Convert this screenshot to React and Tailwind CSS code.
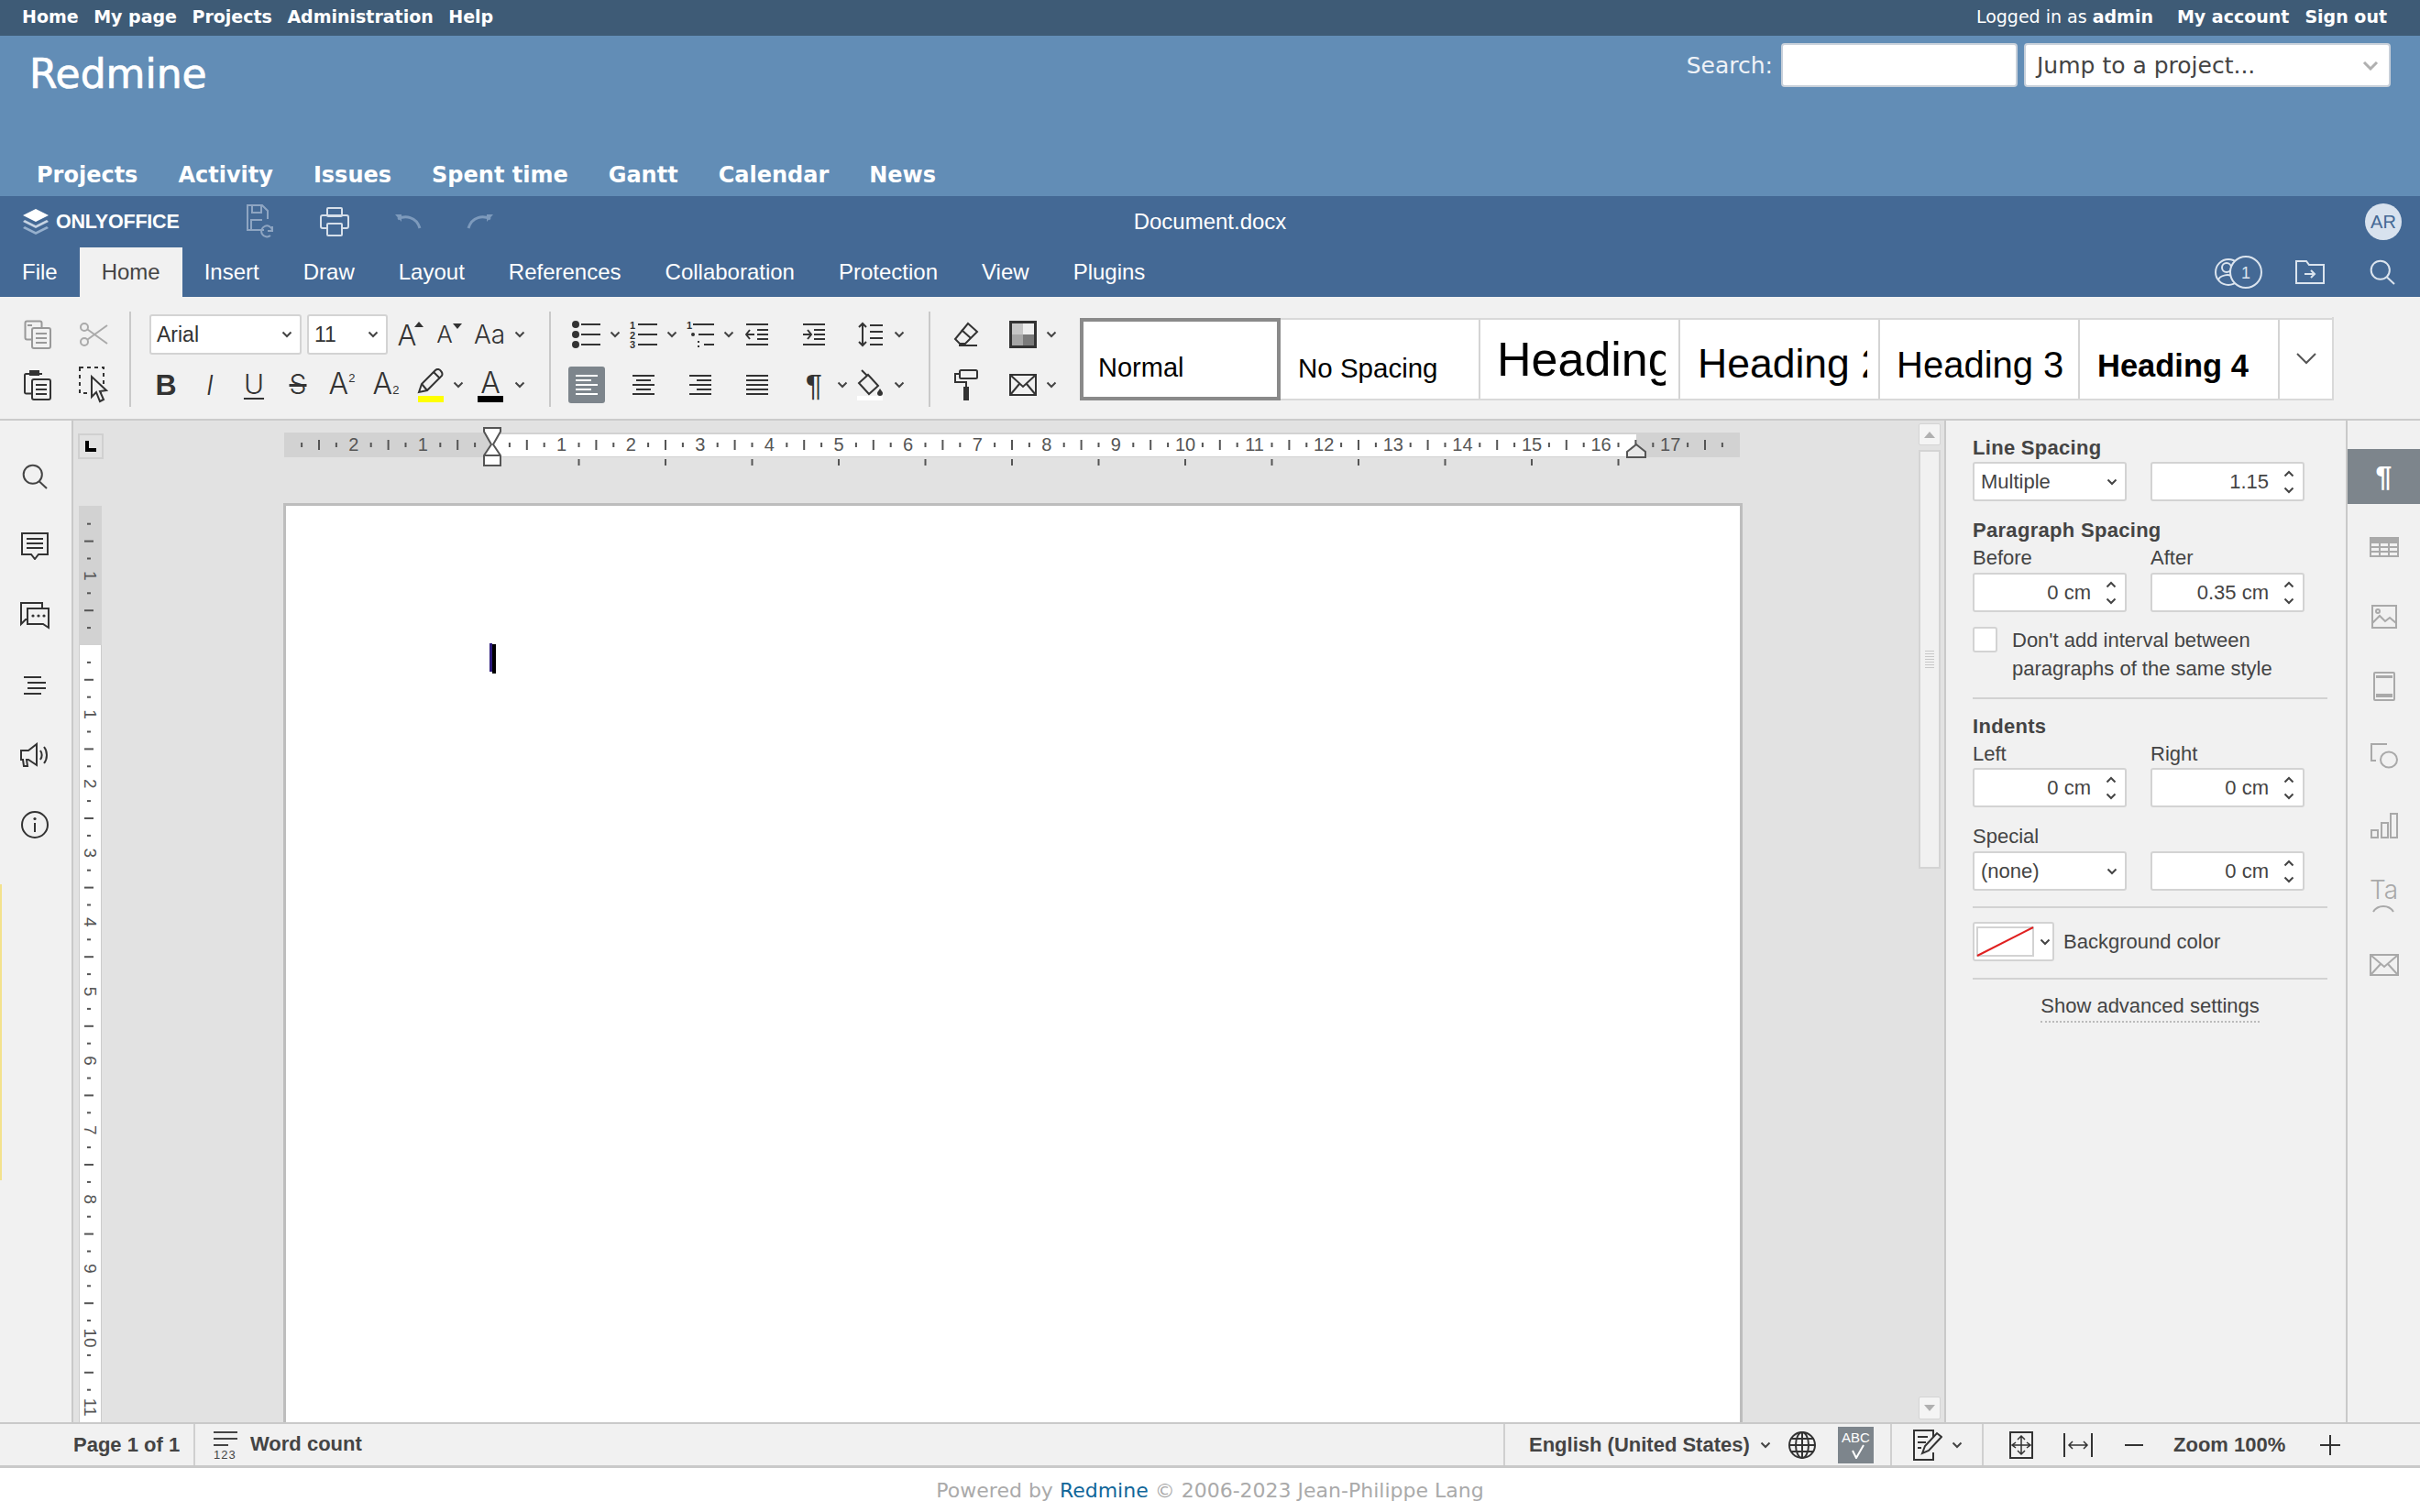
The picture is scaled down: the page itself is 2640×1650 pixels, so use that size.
import React from 'react';

const D = "#444444";
const Sv = ({ w = 30, h = 30, c = D, sw = 2, children, className = "" }) => (
  <svg width={w} height={h} viewBox={`0 0 ${w} ${h}`} fill="none" stroke={c} strokeWidth={sw} className={"block shrink-0 " + className}>{children}</svg>
);
const Chev = ({ c = "#444444", up = false }) => (
  <svg width="12" height="8" viewBox="0 0 12 8" fill="none" stroke={c} strokeWidth="2" className="block shrink-0">
    <path d={up ? "M1.5 6.5 L6 2 L10.5 6.5" : "M1.5 1.5 L6 6 L10.5 1.5"} />
  </svg>
);
const Lines = ({ x1 = 0, x2 = 30, ys = [] }) => <path d={ys.map(y => `M${x1} ${y}H${x2}`).join("")} />;

const IcCopy = () => (<Sv w={30} h={32} c="#999999"><rect x="1.5" y="1.5" width="18" height="20" rx="2" /><rect x="9" y="9" width="20" height="22" rx="2" fill="#f1f1f1" /><Lines x1={13} x2={25} ys={[15, 20, 25]} /><Lines x1={4} x2={9} ys={[6]} /></Sv>);
const IcCut = () => (<Sv w={32} h={28} c="#aaaaaa"><circle cx="6" cy="6" r="4" /><circle cx="6" cy="22" r="4" /><path d="M9.5 8.5L31 24M9.5 19.5L31 4" /></Sv>);
const IcPaste = () => (<Sv w={30} h={34} c="#333333"><path d="M6 5H2.5a1.5 1.5 0 0 0-1.5 1.5V25a1.5 1.5 0 0 0 1.5 1.5H8M16 5h4" /><rect x="6" y="1" width="11" height="6" fill="#333333" stroke="none" /><rect x="9" y="11" width="20" height="22" rx="2" fill="#f1f1f1" /><Lines x1={13} x2={25} ys={[17, 22, 27]} /></Sv>);
const IcSelect = () => (<Sv w={32} h={40} c="#333333"><rect x="1" y="1" width="26" height="28" strokeDasharray="4 4" /><path d="M14 11V33L19 28L23 38L27 36L23 27L30 26Z" fill="#f1f1f1" /></Sv>);
const Thin = ({ s = 34, children }) => <span className="font-['Inter',sans-serif] font-light text-[#333333] leading-none" style={{ fontSize: s }}>{children}</span>;

const IcBullet = () => (<Sv w={32} h={30} c="#333333"><circle cx="4" cy="4" r="3" fill="#333333" /><circle cx="4" cy="15" r="3" fill="#333333" /><circle cx="4" cy="26" r="3" fill="#333333" /><Lines x1={10} x2={31} ys={[4, 15, 26]} /></Sv>);
const TN = ({ x, y, t }) => <text x={x} y={y} fontSize="11" fontWeight="700" fontFamily="'Liberation Sans',sans-serif" fill="#333333" stroke="none">{t}</text>;
const IcNum = () => (<Sv w={32} h={30} c="#333333"><TN x={1} y={9} t="1" /><TN x={1} y={20} t="2" /><TN x={1} y={30} t="3" /><Lines x1={10} x2={31} ys={[4, 15, 26]} /></Sv>);
const IcMulti = () => (<Sv w={32} h={30} c="#333333"><TN x={1} y={9} t="1" /><Lines x1={8} x2={31} ys={[4]} /><circle cx="8" cy="15" r="2" fill="#333333" stroke="none" /><Lines x1={14} x2={31} ys={[15]} /><path d="M14 22v2M14 27v2" /><Lines x1={20} x2={31} ys={[26]} /></Sv>);
const IcOutdent = () => (<Sv w={26} h={26} c="#333333"><Lines x1={1} x2={25} ys={[2, 24]} /><Lines x1={13} x2={25} ys={[8, 13, 18]} /><path d="M10 13H1M5 8L1 13L5 18" /></Sv>);
const IcIndent = () => (<Sv w={26} h={26} c="#333333"><Lines x1={1} x2={25} ys={[2, 24]} /><Lines x1={13} x2={25} ys={[8, 13, 18]} /><path d="M1 13H10M6 8L10 13L6 18" /></Sv>);
const IcLS = () => (<Sv w={28} h={28} c="#333333"><path d="M5 2V26M1 6L5 2L9 6M1 22L5 26L9 22" /><Lines x1={13} x2={27} ys={[4, 11, 18, 25]} /></Sv>);
const IcErase = () => (<Sv w={28} h={28} c="#333333"><path d="M16 2L26 11L13 24H7L2 19Z" /><path d="M9 9L19 18" /><Lines x1={6} x2={26} ys={[26]} /></Sv>);
const IcShade = () => (<Sv w={30} h={30} c="#333333" sw={3}><rect x="2" y="2" width="13" height="13" fill="#c6c6c6" stroke="none" /><rect x="15" y="2" width="13" height="13" fill="#eeeeee" stroke="none" /><rect x="2" y="15" width="13" height="13" fill="#a6a6a6" stroke="none" /><rect x="15" y="15" width="13" height="13" fill="#7a7a7a" stroke="none" /><rect x="1.5" y="1.5" width="27" height="27" /></Sv>);
const AlignI = ({ c = "#333333", xs }) => (<Sv w={26} h={24} c={c}>{xs.map((p, i) => <path key={i} d={`M${p[0]} ${2 + i * 5}H${p[1]}`} />)}</Sv>);
const IcFill = () => (<Sv w={30} h={34} c="#333333"><path d="M5 1L11 7M12 6L23 18L13 27L2 15Z" /><path d="M25 21c2 3 3 4 3 5a3 3 0 0 1-6 0c0-1 1-2 3-5Z" fill="#333333" stroke="none" /><rect x="0" y="29" width="28" height="5" fill="#ffffff" stroke="none" /></Sv>);
const IcRoller = () => (<Sv w={26} h={34} c="#333333"><rect x="6" y="1" width="19" height="9" rx="1.5" /><path d="M6 5H1V14H13V19" /><rect x="10" y="19" width="6" height="15" fill="#333333" stroke="none" /></Sv>);
const IcMail = ({ c = "#333333", w = 30, h = 24 }) => (<Sv w={w} h={h} c={c}><rect x="1" y="1" width={w - 2} height={h - 2} /><path d={`M1 1L${w / 2} ${h / 2 + 2}L${w - 1} 1M1 ${h - 1}L${w / 2 - 4} ${h / 2 - 1}M${w - 1} ${h - 1}L${w / 2 + 4} ${h / 2 - 1}`} /></Sv>);

const IcSearch = ({ c = D, s = 28 }) => (<Sv w={s} h={s} c={c}><circle cx={s * 0.42} cy={s * 0.42} r={s * 0.36} /><path d={`M${s * 0.66} ${s * 0.68}L${s - 1} ${s - 1}`} /></Sv>);
const IcComment = () => (<Sv w={32} h={30} c="#333333"><path d="M2 1H30V24H20L16 29L12 24H2Z" /><Lines x1={7} x2={25} ys={[7, 12, 17]} /></Sv>);
const IcChat = () => (<Sv w={32} h={30} c="#333333"><path d="M24 6V1H1V24L6 19H7" /><path d="M8 7H31V28L25 24H8Z" fill="#f1f1f1" /><circle cx="14" cy="15" r="1.6" fill="#333" stroke="none" /><circle cx="20" cy="15" r="1.6" fill="#333" stroke="none" /><circle cx="26" cy="15" r="1.6" fill="#333" stroke="none" /></Sv>);
const IcHead = () => (<Sv w={26} h={22} c="#333333"><Lines x1={1} x2={20} ys={[2]} /><Lines x1={5} x2={25} ys={[8]} /><Lines x1={5} x2={25} ys={[14]} /><Lines x1={1} x2={20} ys={[20]} /></Sv>);
const IcSpeak = () => (<Sv w={32} h={28} c="#333333"><path d="M1 9H9L18 2V25L9 19H7L8 26H4L3 19H1Z" /><path d="M22 9c2 3 2 7 0 10M26 5c4 5 4 13 0 18" /></Sv>);
const IcInfo = () => (<Sv w={30} h={30} c="#333333"><circle cx="15" cy="15" r="14" /><path d="M15 13V23" /><circle cx="15" cy="8.5" r="1.6" fill="#333" stroke="none" /></Sv>);

const A = "#a9a9a9";
const IcTable = () => (<Sv w={32} h={22} c={A}><rect x="1" y="1" width="30" height="20" /><rect x="1" y="1" width="30" height="6" fill={A} stroke="none" /><path d="M11 1V21M21 1V21M1 11H31M1 16H31" /></Sv>);
const IcImg = () => (<Sv w={28} h={26} c={A}><rect x="1" y="1" width="26" height="24" /><circle cx="7" cy="7" r="2" /><path d="M1 20L9 12L15 18L20 14L27 20" /></Sv>);
const IcHF = () => (<Sv w={24} h={32} c={A}><rect x="1" y="1" width="22" height="30" rx="1" /><rect x="3" y="4" width="18" height="3" fill={A} stroke="none" /><rect x="3" y="24" width="18" height="4" fill={A} stroke="none" /></Sv>);
const IcShape = () => (<Sv w={30} h={28} c={A}><path d="M18 1H1V19H6" /><ellipse cx="20" cy="18" rx="9" ry="8.5" /></Sv>);
const IcChart = () => (<Sv w={30} h={28} c={A}><rect x="1" y="19" width="7" height="8" /><rect x="12" y="11" width="7" height="16" /><rect x="22" y="1" width="7" height="26" /></Sv>);
const IcTa = () => (<Sv w={26} h={12} c={A}><path d="M2 11c5-8 17-8 22 0" /></Sv>);

const IcSave = () => (<Sv w={32} h={38} c="#8ea5c2"><path d="M20 28H2V1H18L24 7V16" /><path d="M7 1V9H17V1M6 28V17H18" /><path d="M29 28a6 6 0 1 0-2 6M29 24V29H24" /></Sv>);
const IcPrint = () => (<Sv w={32} h={32} c="#d6dfea"><rect x="8" y="1" width="16" height="9" rx="1" /><rect x="1" y="9" width="30" height="14" rx="2" /><rect x="8" y="18" width="16" height="13" rx="1" fill="#446995" /></Sv>);
const IcUndo = ({ flip }) => (<Sv w={30} h={18} c="#7d9abc" sw={3} className={flip ? "-scale-x-100" : ""}><path d="M4 6c8-4 20-3 24 10" /><path d="M1 1H8V9Z" fill="#7d9abc" stroke="none" /></Sv>);

const Tab = ({ children, active }) => (
  <div className={active ? "h-full flex items-center px-[24px] bg-[#f1f1f1] text-[#444444]" : "h-full flex items-center text-white"}>{children}</div>
);

const Box = ({ w = "w-[168px]", h = "h-[43px]", children, className = "" }) => (
  <div className={`${w} ${h} bg-white border-2 border-[#d3d3d3] rounded-[3px] flex items-center ${className}`}>{children}</div>
);
const Spin = ({ v }) => (
  <Box>
    <span className="flex-1 text-right text-[22px] text-[#444444] pr-[16px]">{v}</span>
    <div className="flex flex-col gap-[10px] items-center pr-[9px]"><Chev up /><Chev /></div>
  </Box>
);
const Sel = ({ v }) => (
  <Box className="justify-between pl-[7px] pr-[8px]">
    <span className="text-[22px] text-[#444444]">{v}</span><Chev />
  </Box>
);
const Label = ({ b, children, className = "" }) => (
  <div className={`h-[22px] leading-[24px] text-[22px] text-[#444444] whitespace-nowrap ${b ? "font-bold tracking-[0.3px]" : ""} ${className}`}>{children}</div>
);
const HR = ({ className }) => <div className={`h-[2px] w-[387px] bg-[#d2d2d2] ${className}`} />;

const cm = 75.6;
const qs = (a, b) => { const o = []; for (let i = a; i <= b; i++) o.push(i); return o; };

const HRuler = () => {
  const z = 228;
  return (
    <svg width="1592" height="46" viewBox="0 0 1592 46" className="block">
      <rect x="1" y="8" width="1588" height="27" fill="#d2d2d2" />
      <rect x={z} y="10" width="1248" height="24" fill="#ffffff" />
      {qs(-11, 71).map(q => {
        if (q === 0) return null;
        const x = z + q * cm / 4;
        if (q % 4 === 0) return <text key={q} x={x} y="28" textAnchor="middle" fontSize="20" fontFamily="'Liberation Sans',sans-serif" fill="#555555">{Math.abs(q / 4)}</text>;
        const big = Math.abs(q % 4) === 2;
        return <rect key={q} x={x - 1} y={big ? 16 : 19} width="2" height={big ? 11 : 5} fill="#555555" />;
      })}
      {qs(1, 13).map(n => <rect key={n} x={z + n * 94.5 - 1} y="37" width="2" height="7" fill="#555555" />)}
      <path d={`M${z - 9} 3H${z + 9}V7L${z + 1} 21L${z + 9} 33V44H${z - 9}V33L${z - 1} 21L${z - 9} 7Z`} fill="#ffffff" stroke="#555555" strokeWidth="2" />
      <path d={`M${z - 9} 33H${z + 9}`} stroke="#555555" strokeWidth="2" />
      <path d={`M${z + 1238} 35V29L${z + 1248} 21L${z + 1258} 29V35Z`} fill="#e8e8e8" stroke="#555555" strokeWidth="2" />
    </svg>
  );
};

const VRuler = () => {
  const z = 152;
  return (
    <svg width="25" height="1000" viewBox="0 0 25 1000" className="block">
      <rect x="0" y="0" width="25" height={z} fill="#d2d2d2" />
      <rect x="1" y={z} width="23" height="848" fill="#ffffff" />
      <rect x="0" y={z} width="1" height="848" fill="#cccccc" />
      <rect x="24" y={z} width="1" height="848" fill="#cccccc" />
      {qs(-7, 44).map(q => {
        if (q === 0) return null;
        const y = z + q * cm / 4;
        if (q % 4 === 0) return <text key={q} x="12" y={y} textAnchor="middle" dominantBaseline="central" fontSize="19" fontFamily="'Liberation Sans',sans-serif" fill="#555555" transform={`rotate(90 12 ${y})`}>{Math.abs(q / 4)}</text>;
        const big = Math.abs(q % 4) === 2;
        return <rect key={q} x={big ? 6 : 9} y={y - 1} width={big ? 10 : 4} height="2" fill="#555555" />;
      })}
    </svg>
  );
};

export default function App() {
  return (
    <div className="w-[2640px] h-[1650px] flex flex-col bg-white overflow-hidden font-['Liberation_Sans',Arial,sans-serif]">
      {/* Redmine top */}
      <div className="h-[39px] shrink-0 bg-[#3e5b76] flex items-center justify-between pl-[24px] pr-[36px] pb-[2px] text-white font-['DejaVu_Sans',sans-serif] text-[19px] font-bold">
        <div className="flex gap-[16.5px]"><span>Home</span><span>My page</span><span>Projects</span><span>Administration</span><span>Help</span></div>
        <div className="flex gap-[26px]">
          <span><span className="font-normal">Logged in as </span>admin</span>
          <span className="flex gap-[17px]"><span>My account</span><span>Sign out</span></span>
        </div>
      </div>
      <div className="h-[175px] shrink-0 bg-[#628db6] flex flex-col font-['DejaVu_Sans',sans-serif] text-white">
        <div className="flex justify-between pl-[32px] pr-[32px] pt-[8px]">
          <div className="text-[44px] leading-[50px] pt-[9px] [-webkit-text-stroke:0.7px_white]">Redmine</div>
          <div className="flex items-center gap-[7px] h-[48px]">
            <span className="text-[25px] text-[#eef2f7] mr-[2px] pt-[2px]">Search:</span>
            <div className="w-[258px] h-[48px] bg-white rounded-[4px] border-2 border-[#c8d0da]" />
            <div className="w-[400px] h-[48px] bg-white rounded-[4px] border-2 border-[#c8d0da] flex items-center justify-between pl-[12px] pr-[11px]">
              <span className="text-[25px] text-[#444444] pt-[2px]">Jump to a project...</span>
              <svg width="18" height="11" viewBox="0 0 18 11" fill="none" stroke="#b0b0b0" strokeWidth="3" className="block"><path d="M2 2L9 9L16 2" /></svg>
            </div>
          </div>
        </div>
        <div className="mt-auto pb-[5px] pl-[40px] flex gap-[44px] text-[24px] font-bold"><span>Projects</span><span>Activity</span><span>Issues</span><span>Spent time</span><span>Gantt</span><span>Calendar</span><span>News</span></div>
      </div>

      {/* Editor header */}
      <div className="h-[56px] bg-[#446995] flex items-center pl-[24px] pr-[20px] shrink-0">
        <div className="flex items-center gap-[7px] w-[244px] shrink-0">
          <svg width="30" height="30" viewBox="0 0 30 30" className="block">
            <path d="M15 1L29 8L15 15L1 8Z" fill="#ffffff" />
            <path d="M3 13L15 19L27 13L29 15L15 22L1 15Z" fill="#c6d4e4" />
            <path d="M3 20L15 26L27 20L29 22L15 29L1 22Z" fill="#96b0cd" />
          </svg>
          <span className="text-white font-bold text-[21.5px] tracking-[-0.2px]">ONLYOFFICE</span>
        </div>
        <div className="flex items-center gap-[49px] w-[272px] shrink-0"><IcSave /><IcPrint /><IcUndo /><IcUndo flip /></div>
        <div className="w-[1560px] text-center text-white text-[24px] shrink-0">Document.docx</div>
        <div className="ml-auto w-[40px] h-[40px] rounded-full bg-[#d8e2ee] text-[#446995] text-[20px] flex items-center justify-center">AR</div>
      </div>
      <div className="h-[54px] bg-[#446995] flex items-center pl-[24px] pr-[27px] text-[24px] shrink-0">
        <Tab>File</Tab>
        <div className="w-[24px]" />
        <Tab active>Home</Tab>
        <div className="flex h-full gap-[48px] pl-[24px]">
          <Tab>Insert</Tab><Tab>Draw</Tab><Tab>Layout</Tab><Tab>References</Tab><Tab>Collaboration</Tab><Tab>Protection</Tab><Tab>View</Tab><Tab>Plugins</Tab>
        </div>
        <div className="ml-auto flex items-center">
          <Sv w={58} h={38} c="#dbe4ee"><circle cx="20" cy="19" r="14" /><circle cx="18" cy="14" r="5" /><path d="M9 28c1-6 13-8 16-3" /><circle cx="39" cy="19" r="17" fill="#446995" /><text x="39" y="26" textAnchor="middle" fontSize="18" fontFamily="'Liberation Sans',sans-serif" fill="#dbe4ee" stroke="none">1</text></Sv>
          <div className="ml-[35px] mr-[49px]"><Sv w={32} h={26} c="#dbe4ee"><path d="M1 1H12L15 5H31V25H1Z" /><path d="M10 15H21M17 11L21 15L17 19" /></Sv></div>
          <IcSearch c="#dbe4ee" />
        </div>
      </div>

      {/* Toolbar */}
      <div className="h-[135px] bg-[#f1f1f1] border-b-2 border-[#cbcbcb] flex items-start pt-[16px] shrink-0">
        <div className="w-[141px] pt-[3px] pl-[10px] grid grid-cols-[61px_61px] grid-rows-[44px_44px] gap-y-[11px] place-items-center shrink-0">
          <IcCopy /><IcCut /><IcPaste /><IcSelect />
        </div>
        <div className="w-[2px] h-[104px] bg-[#c9c9c9] shrink-0" />
        <div className="w-[456px] pt-[3px] shrink-0 flex flex-col gap-[11px]">
          <div className="h-[44px] flex items-center pl-[20px]">
            <Box w="w-[166px]" h="h-[44px]" className="justify-between pl-[6px] pr-[8px]"><span className="text-[23px] text-[#333333]">Arial</span><Chev /></Box>
            <Box w="w-[88px]" h="h-[44px]" className="justify-between pl-[6px] pr-[8px] ml-[6px]"><span className="text-[23px] text-[#333333]">11</span><Chev /></Box>
            <div className="w-[48px] flex justify-center pl-[2px]"><Thin s={31}>A</Thin><svg width="10" height="8" viewBox="0 0 10 8" className="-ml-[2px]"><path d="M5 1L10 7H0Z" fill="#333" /></svg></div>
            <div className="w-[38px] flex justify-center"><Thin s={26}>A</Thin><svg width="10" height="8" viewBox="0 0 10 8"><path d="M5 7L10 1H0Z" fill="#333" /></svg></div>
            <div className="w-[50px] flex justify-center"><Thin s={28}>Aa</Thin></div>
            <div className="w-[16px] flex justify-center"><Chev /></div>
          </div>
          <div className="h-[44px] flex items-center pl-[14px]">
            <div className="w-[48px] text-center text-[32px] font-bold text-[#333333]">B</div>
            <div className="w-[48px] text-center"><span className="font-['Inter',sans-serif] font-light italic text-[30px] text-[#333333]">I</span></div>
            <div className="w-[48px] text-center"><Thin s={30}><span className="underline underline-offset-[4px] decoration-2">U</span></Thin></div>
            <div className="w-[48px] text-center"><Thin s={30}><span className="line-through">S</span></Thin></div>
            <div className="w-[48px] text-center"><Thin s={32}>A</Thin><span className="text-[13px] text-[#333333] align-top">2</span></div>
            <div className="w-[48px] text-center"><Thin s={32}>A</Thin><span className="text-[13px] text-[#333333]">2</span></div>
            <div className="w-[46px] flex flex-col items-center pl-[4px]">
              <Sv w={30} h={28} c="#333333"><path d="M2 26L5 17L20 2C22 0 25 1 26 3C28 5 28 6 27 8L11 24Z" /><path d="M18 4L25 11M5 17L11 24" /></Sv>
              <div className="w-[28px] h-[7px] bg-[#ffff00] mt-[2px]" />
            </div>
            <div className="w-[18px] flex justify-center"><Chev /></div>
            <div className="w-[50px] flex flex-col items-center pl-[2px]">
              <div className="h-[28px] leading-[28px] text-center"><Thin s={32}>A</Thin></div>
              <div className="w-[28px] h-[7px] bg-black mt-[2px]" />
            </div>
            <div className="w-[16px] flex justify-center"><Chev /></div>
          </div>
        </div>
        <div className="w-[2px] h-[104px] bg-[#c9c9c9] shrink-0" />
        <div className="pl-[15px] pt-[3px] grid grid-cols-[repeat(6,48px_14px)] grid-rows-[44px_44px] gap-y-[11px] place-items-center w-[412px] shrink-0">
          <IcBullet /><Chev /><IcNum /><Chev /><IcMulti /><Chev /><IcOutdent /><div /><IcIndent /><div /><IcLS /><Chev />
          <div className="w-[40px] h-[40px] rounded-[3px] bg-[#7d858c] flex items-center justify-center"><AlignI c="#ffffff" xs={[[1, 25], [1, 18], [1, 25], [1, 18], [1, 25]]} /></div><div />
          <AlignI xs={[[1, 25], [5, 21], [1, 25], [5, 21], [1, 25]]} /><div />
          <AlignI xs={[[1, 25], [9, 25], [1, 25], [9, 25], [1, 25]]} /><div />
          <AlignI xs={[[1, 25], [1, 25], [1, 25], [1, 25], [1, 25]]} /><div />
          <span className="text-[34px] leading-none text-[#333333]">¶</span><Chev />
          <IcFill /><Chev />
        </div>
        <div className="w-[2px] h-[104px] bg-[#c9c9c9] shrink-0" />
        <div className="pl-[15px] pt-[3px] grid grid-cols-[48px_14px_48px_14px] grid-rows-[44px_44px] gap-y-[11px] place-items-center w-[163px] shrink-0">
          <IcErase /><div /><IcShade /><Chev />
          <IcRoller /><div /><IcMail /><Chev />
        </div>
        {/* style gallery */}
        <div className="h-[90px] mt-[7px] flex bg-white border-y-2 border-[#d9d9d9] text-black shrink-0">
          <div className="w-[219px] -my-[2px] border-4 border-[#8a8a8a] flex items-center pl-[16px] pt-[19px] text-[29px]">Normal</div>
          <div className="w-[218px] border-r-2 border-[#d4d4d4] flex items-center pl-[19px] pt-[20px] text-[29.5px] whitespace-nowrap">No Spacing</div>
          <div className="w-[218px] border-r-2 border-[#d4d4d4] flex items-center pl-[18px] pr-[14px]"><div className="overflow-hidden whitespace-nowrap text-[52px] leading-[70px]">Heading 1</div></div>
          <div className="w-[218px] border-r-2 border-[#d4d4d4] flex items-center pl-[19px] pr-[12px]"><div className="overflow-hidden whitespace-nowrap text-[44.5px] leading-[60px] pt-[9px]">Heading 2</div></div>
          <div className="w-[218px] border-r-2 border-[#d4d4d4] flex items-center pl-[18px] pt-[12px] text-[40px] whitespace-nowrap">Heading 3</div>
          <div className="w-[218px] border-r-2 border-[#d4d4d4] flex items-center pl-[19px] pt-[15px] text-[34.5px] font-bold whitespace-nowrap">Heading 4</div>
          <div className="w-[59px] flex items-center justify-center -mt-[3px] border-r-2 border-[#d9d9d9]"><svg width="24" height="14" viewBox="0 0 24 14" fill="none" stroke="#555" strokeWidth="2"><path d="M2 2L12 12L22 2" /></svg></div>
        </div>
      </div>

      {/* Middle */}
      <div className="flex-1 min-h-0 flex">
        <div className="w-[80px] relative bg-[#f1f1f1] border-r-2 border-[#c9c9c9] flex flex-col items-center pt-[23px] shrink-0 pr-[2px]">
          <div className="absolute left-0 top-[506px] w-[2px] h-[323px] bg-[#f3e28d]" />
          <div className="h-[76px] shrink-0 flex items-center justify-center"><IcSearch /></div>
          <div className="h-[76px] shrink-0 flex items-center justify-center"><IcComment /></div>
          <div className="h-[76px] shrink-0 flex items-center justify-center"><IcChat /></div>
          <div className="h-[76px] shrink-0 flex items-center justify-center"><IcHead /></div>
          <div className="h-[76px] shrink-0 flex items-center justify-center"><IcSpeak /></div>
          <div className="h-[76px] shrink-0 flex items-center justify-center"><IcInfo /></div>
        </div>

        <div className="w-[2041px] bg-[#e2e2e2] flex overflow-hidden shrink-0">
          <div className="w-[229px] shrink-0 flex flex-col overflow-hidden">
            <div className="ml-[5px] mt-[14px] w-[28px] h-[28px] border-2 border-[#d0d0d0] flex items-center justify-center shrink-0">
              <div className="w-[12px] h-[12px] border-l-[4px] border-b-[4px] border-black" />
            </div>
            <div className="ml-[6px] mt-[51px]"><VRuler /></div>
          </div>
          <div className="w-[1592px] shrink-0 pt-[5px] flex flex-col">
            <HRuler />
            <div className="mt-[39px] flex-1 bg-white border-x-[3px] border-t-[3px] border-[#bdbdbd] pl-[222px] pt-[150px]">
              <div className="flex items-start">
                <div className="w-[3px] h-[31px] bg-[#2b1a7a]" />
                <div className="w-[4px] h-[32px] bg-black mt-[1px]" />
              </div>
            </div>
          </div>
          <div className="flex-1 flex justify-end pr-[4px]">
            <div className="w-[24px] flex flex-col">
              <div className="mt-[3px] h-[24px] shrink-0 bg-[#f4f4f4] border border-[#d4d4d4] rounded-[2px] flex items-center justify-center">
                <div className="w-0 h-0 border-x-[6px] border-x-transparent border-b-[7px] border-b-[#b0b0b0]" />
              </div>
              <div className="mt-[5px] h-[457px] shrink-0 bg-[#f1f1f1] border-2 border-[#d4d4d4] flex flex-col items-center justify-center gap-[2px]">
                {[0, 1, 2, 3, 4, 5, 6].map(i => <div key={i} className="w-[10px] h-[1px] bg-[#c8c8c8]" />)}
              </div>
              <div className="mt-auto mb-[3px] h-[25px] shrink-0 bg-[#f4f4f4] border border-[#d4d4d4] rounded-[2px] flex items-center justify-center">
                <div className="w-0 h-0 border-x-[6px] border-x-transparent border-t-[7px] border-t-[#b0b0b0]" />
              </div>
            </div>
          </div>
        </div>

        <div className="w-[440px] bg-[#f1f1f1] border-l-2 border-r-2 border-[#c9c9c9] pl-[29px] pt-[18px] shrink-0">
          <Label b>Line Spacing</Label>
          <div className="mt-[5px] flex gap-[26px]"><Sel v="Multiple" /><Spin v="1.15" /></div>
          <Label b className="mt-[20px]">Paragraph Spacing</Label>
          <div className="mt-[8px] flex gap-[26px]"><Label className="w-[168px]">Before</Label><Label>After</Label></div>
          <div className="mt-[6px] flex gap-[26px]"><Spin v="0 cm" /><Spin v="0.35 cm" /></div>
          <div className="mt-[16px] flex">
            <div className="w-[27px] h-[28px] bg-white border-2 border-[#d3d3d3] rounded-[3px] shrink-0" />
            <div className="ml-[16px] text-[22px] leading-[31px] text-[#444444] -mt-[1px]">Don't add interval between<br />paragraphs of the same style</div>
          </div>
          <HR className="mt-[16px]" />
          <Label b className="mt-[18px]">Indents</Label>
          <div className="mt-[8px] flex gap-[26px]"><Label className="w-[168px]">Left</Label><Label>Right</Label></div>
          <div className="mt-[5px] flex gap-[26px]"><Spin v="0 cm" /><Spin v="0 cm" /></div>
          <Label className="mt-[20px]">Special</Label>
          <div className="mt-[6px] flex gap-[26px]"><Sel v="(none)" /><Spin v="0 cm" /></div>
          <HR className="mt-[17px]" />
          <div className="mt-[15px] flex items-center">
            <Box w="w-[89px]" className="pl-[2px] gap-[6px]">
              <svg width="63" height="33" viewBox="0 0 63 33" className="block"><rect x="1" y="1" width="61" height="31" fill="#fff" stroke="#d3d3d3" strokeWidth="2" /><path d="M1 32L62 1" stroke="#e02020" strokeWidth="2" /></svg>
              <Chev />
            </Box>
            <span className="ml-[10px] text-[22px] text-[#444444]">Background color</span>
          </div>
          <HR className="mt-[18px]" />
          <div className="mt-[18px] w-[387px] flex justify-center">
            <span className="text-[22px] leading-[22px] text-[#444444] pb-[5px] border-b-2 border-dotted border-[#bbbbbb]">Show advanced settings</span>
          </div>
        </div>

        <div className="flex-1 bg-[#f1f1f1] flex flex-col items-center pt-[31px]">
          <div className="w-full h-[60px] shrink-0 bg-[#7d858c] flex items-center justify-center text-white text-[32px] font-bold">¶</div>
          <div className="mt-[9px] h-[76px] shrink-0 flex items-center"><IcTable /></div>
          <div className="h-[76px] shrink-0 flex items-center"><IcImg /></div>
          <div className="h-[76px] shrink-0 flex items-center"><IcHF /></div>
          <div className="h-[76px] shrink-0 flex items-center"><IcShape /></div>
          <div className="h-[76px] shrink-0 flex items-center"><IcChart /></div>
          <div className="h-[76px] shrink-0 flex flex-col items-center justify-center"><span className="text-[28px] leading-[26px] text-[#a9a9a9] font-['Inter',sans-serif] font-light">Ta</span><IcTa /></div>
          <div className="h-[76px] shrink-0 flex items-center"><IcMail c={A} w={32} h={24} /></div>
        </div>
      </div>

      {/* Status */}
      <div className="h-[50px] bg-[#f1f1f1] border-t-2 border-b-[3px] border-[#c9c9c9] flex items-stretch text-[22px] font-bold text-[#444444] shrink-0">
        <div className="w-[213px] border-r-2 border-[#d0d0d0] flex items-center pl-[80px]">Page 1 of 1</div>
        <div className="flex items-center pl-[20px] gap-[14px]">
          <svg width="26" height="32" viewBox="0 0 26 32" className="block"><path d="M0 2H26M0 9H26M0 16H16" stroke="#444" strokeWidth="2" /><text x="0" y="31" fontSize="13" fontFamily="'Liberation Sans',sans-serif" fill="#444" fontWeight="400" letterSpacing="1">123</text></svg>
          <span className="-mt-[3px]">Word count</span>
        </div>
        <div className="ml-auto w-[424px] border-x-2 border-[#d0d0d0] flex items-center pl-[26px]">
          <span className="w-[240px] whitespace-nowrap">English (United States)</span>
          <div className="ml-[12px]"><Chev /></div>
          <div className="ml-[19px]"><Sv w={30} h={30} c="#333333"><circle cx="15" cy="15" r="14" /><ellipse cx="15" cy="15" rx="7" ry="14" /><path d="M15 1V29M1 15H29M3 8H27M3 22H27" /></Sv></div>
          <div className="ml-[24px] w-[39px] h-[40px] bg-[#7d858c] flex flex-col items-center justify-center">
            <span className="text-[15px] leading-[14px] font-normal text-white">ABC</span>
            <svg width="20" height="16" viewBox="0 0 20 16" fill="none" stroke="#fff" strokeWidth="2"><path d="M6 7L10 15L18 1" /></svg>
          </div>
        </div>
        <div className="w-[100px] border-r-2 border-[#d0d0d0] flex items-center justify-center gap-[10px] pl-[2px]">
          <Sv w={32} h={34} c="#333333"><path d="M22 10V1H1V33H22V25" /><path d="M5 8H16M5 14H14M5 20H9" /><path d="M10 26L13 18L26 4L31 8L17 23Z" fill="#f1f1f1" /></Sv>
          <Chev />
        </div>
        <div className="w-[476px] flex items-center pl-[28px]">
          <Sv w={26} h={30} c="#333333"><rect x="1" y="1" width="24" height="28" /><path d="M13 5V25M9 9L13 5L17 9M9 21L13 25L17 21M3 15H23M7 12L3 15L7 18M19 12L23 15L19 18" strokeWidth="1.5" /></Sv>
          <div className="ml-[32px]"><Sv w={34} h={26} c="#333333"><path d="M2 0V26M32 0V26" /><path d="M7 13H27M11 9L7 13L11 17M23 9L27 13L23 17" strokeWidth="1.5" /></Sv></div>
          <div className="ml-[34px] w-[20px] h-[2px] bg-[#333333]" />
          <span className="ml-[33px] whitespace-nowrap">Zoom 100%</span>
          <div className="ml-[37px]"><Sv w={24} h={24} c="#333333"><path d="M12 1V23M1 12H23" /></Sv></div>
        </div>
      </div>

      <div className="h-[48px] shrink-0 flex items-center justify-center font-['DejaVu_Sans',sans-serif] text-[22px] text-[#aaaaaa]">
        <span>Powered by <span className="text-[#116699]">Redmine</span> © 2006-2023 Jean-Philippe Lang</span>
      </div>
    </div>
  );
}
